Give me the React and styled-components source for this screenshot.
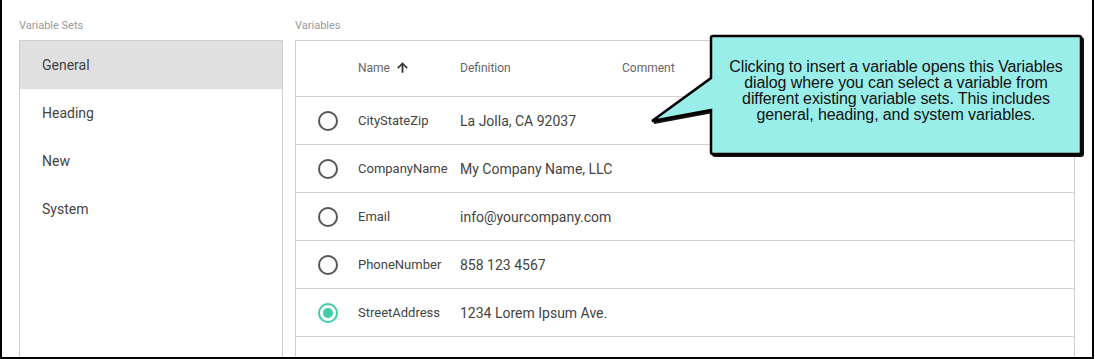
import React from "react";
import styled, { createGlobalStyle } from "styled-components";

const Global = createGlobalStyle`
  html, body { margin: 0; padding: 0; background: #fff; }
  body { font-family: Roboto, "Noto Sans", sans-serif; }
`;

const Frame = styled.div`
  position: relative;
  box-sizing: border-box;
  width: 1094px;
  height: 359px;
  border: 2px solid #000;
  border-top: none;
  overflow: hidden;
  display: flex;
  gap: 12px;
  padding: 18px 0 0 17px;
`;

const Column = styled.div`
  display: flex;
  flex-direction: column;
  width: ${(p) => p.$w}px;
  flex: none;
`;

const Label = styled.div`
  font-size: 11px;
  line-height: 15px;
  color: #9a9a9a;
  margin-bottom: 7px;
`;

const SetList = styled.div`
  flex: 1;
  border: 1px solid #cfcfcf;
  border-bottom: none;
`;

const SetItem = styled.div`
  height: 48px;
  display: flex;
  align-items: center;
  padding-left: 22px;
  font-size: 14px;
  color: #444;
  background: ${(p) => (p.$active ? "#e0e0e0" : "transparent")};
`;

const Table = styled.div`
  flex: 1;
  border: 1px solid #cfcfcf;
  border-bottom: none;
`;

const Row = styled.div`
  display: grid;
  grid-template-columns: 62px 102px 162px 1fr;
  align-items: center;
  height: ${(p) => (p.$head ? 55 : 47)}px;
  border-bottom: 1px solid #d0d0d0;
`;

const HeadCell = styled.div`
  font-size: 12px;
  color: #666;
  display: flex;
  align-items: center;
  gap: 5px;
  padding-bottom: 2px;
`;

const NameCell = styled.div`
  font-size: 13px;
  color: #444;
  white-space: nowrap;
`;

const DefCell = styled.div`
  font-size: 14px;
  color: #444;
  white-space: nowrap;
`;

const RadioCell = styled.div`
  padding-left: 22px;
  display: flex;
  align-items: center;
`;

const Radio = styled.div`
  box-sizing: border-box;
  width: 20px;
  height: 20px;
  border-radius: 50%;
  border: 2px solid ${(p) => (p.$checked ? "#3fcca8" : "#555")};
  display: flex;
  align-items: center;
  justify-content: center;
  &::after {
    content: "";
    width: 10px;
    height: 10px;
    border-radius: 50%;
    background: ${(p) => (p.$checked ? "#3fcca8" : "transparent")};
  }
`;

const CalloutShape = styled.svg`
  position: absolute;
  left: 0;
  top: 0;
  pointer-events: none;
`;

const CalloutText = styled.div`
  position: absolute;
  left: 709px;
  top: 36px;
  width: 370px;
  height: 118px;
  box-sizing: border-box;
  padding-bottom: 8px;
  display: flex;
  align-items: center;
  justify-content: center;
  text-align: center;
  font-family: "Liberation Sans", Arial, sans-serif;
  font-size: 16px;
  line-height: 16px;
  letter-spacing: -0.1px;
  color: #111;
`;

const ArrowUp = () => (
  <svg width="15" height="15" viewBox="0 0 24 24" fill="#333">
    <path d="M4 12l1.41 1.41L11 7.83V20h2V7.83l5.58 5.59L20 12l-8-8-8 8z" stroke="#333" strokeWidth="0.8" />
  </svg>
);

const sets = ["General", "Heading", "New", "System"];
const vars = [
  ["CityStateZip", "La Jolla, CA 92037"],
  ["CompanyName", "My Company Name, LLC"],
  ["Email", "info@yourcompany.com"],
  ["PhoneNumber", "858 123 4567"],
  ["StreetAddress", "1234 Lorem Ipsum Ave."],
];

const calloutPath =
  "M711 36 H1077 Q1079 36 1079 38 V152 Q1079 154 1077 154 H711 Q709 154 709 152 V110 L650 121 L709 78 V38 Q709 36 711 36 Z";

export default function App() {
  return (
    <>
      <Global />
      <Frame>
        <Column $w={264}>
          <Label>Variable Sets</Label>
          <SetList>
            {sets.map((s, i) => (
              <SetItem key={s} $active={i === 0}>
                {s}
              </SetItem>
            ))}
          </SetList>
        </Column>
        <Column $w={780}>
          <Label>Variables</Label>
          <Table>
            <Row $head>
              <div />
              <HeadCell>
                Name <ArrowUp />
              </HeadCell>
              <HeadCell>Definition</HeadCell>
              <HeadCell>Comment</HeadCell>
            </Row>
            {vars.map(([n, d], i) => (
              <Row key={n}>
                <RadioCell>
                  <Radio $checked={i === 4} />
                </RadioCell>
                <NameCell>{n}</NameCell>
                <DefCell>{d}</DefCell>
                <div />
              </Row>
            ))}
            <Row />
          </Table>
        </Column>
        <CalloutShape width="1094" height="170" viewBox="0 0 1094 170">
          <path d={calloutPath} transform="translate(2 2)" fill="#111" stroke="#111" strokeWidth="2" />
          <path d={calloutPath} fill="#9aeeea" stroke="#000" strokeWidth="2.5" strokeLinejoin="miter" />
        </CalloutShape>
        <CalloutText>
          <div>
            Clicking to insert a variable opens this Variables
            <br />
            dialog where you can select a variable from
            <br />
            different existing variable sets. This includes
            <br />
            general, heading, and system variables.
          </div>
        </CalloutText>
      </Frame>
    </>
  );
}
